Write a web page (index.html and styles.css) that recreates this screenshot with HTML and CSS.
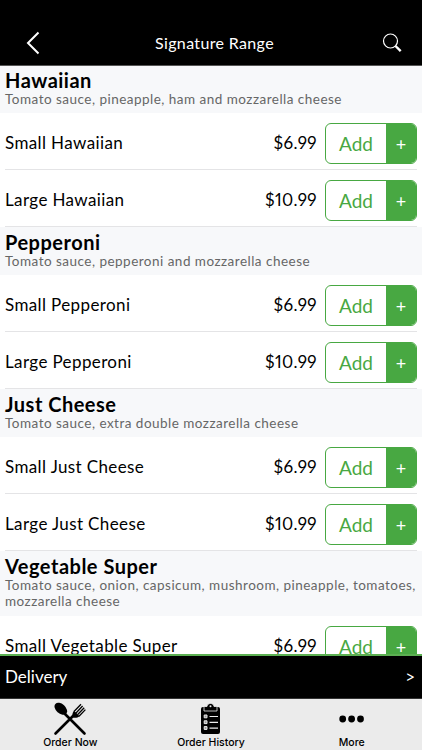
FILE: index.html
```
<!DOCTYPE html>
<html>
<head>
    <meta charset="utf-8">
    <title>Signature Range</title>
    <link rel="stylesheet" href="styles.css">
</head>
<body>
    <div class="navbar">
        <svg class="back" width="14" height="24" viewBox="0 0 14 24"><path d="M12.500 1.500L2 12l10.500 10.500"/></svg>
        <div class="navbar-title">Signature Range</div>
        <svg class="search" width="20" height="20" viewBox="0 0 20 20"><circle cx="8.500" cy="8" r="7"/><path d="M13.500 13l5.200 5.200"/></svg>
    </div>
    <div class="menu">
        <div class="group">
            <h2>Hawaiian</h2>
            <p>Tomato sauce, pineapple, ham and mozzarella cheese</p>
        </div>
        <div class="item">
            <span class="name">Small Hawaiian</span>
            <span class="price">$6.99</span>
            <div class="buy"><span class="add">Add</span><span class="plus">+</span></div>
        </div>
        <div class="item">
            <span class="name">Large Hawaiian</span>
            <span class="price">$10.99</span>
            <div class="buy"><span class="add">Add</span><span class="plus">+</span></div>
        </div>
        <div class="group">
            <h2>Pepperoni</h2>
            <p>Tomato sauce, pepperoni and mozzarella cheese</p>
        </div>
        <div class="item">
            <span class="name">Small Pepperoni</span>
            <span class="price">$6.99</span>
            <div class="buy"><span class="add">Add</span><span class="plus">+</span></div>
        </div>
        <div class="item">
            <span class="name">Large Pepperoni</span>
            <span class="price">$10.99</span>
            <div class="buy"><span class="add">Add</span><span class="plus">+</span></div>
        </div>
        <div class="group">
            <h2>Just Cheese</h2>
            <p>Tomato sauce, extra double mozzarella cheese</p>
        </div>
        <div class="item">
            <span class="name">Small Just Cheese</span>
            <span class="price">$6.99</span>
            <div class="buy"><span class="add">Add</span><span class="plus">+</span></div>
        </div>
        <div class="item">
            <span class="name">Large Just Cheese</span>
            <span class="price">$10.99</span>
            <div class="buy"><span class="add">Add</span><span class="plus">+</span></div>
        </div>
        <div class="group">
            <h2>Vegetable Super</h2>
            <p>Tomato sauce, onion, capsicum, mushroom, pineapple, tomatoes,<br>mozzarella cheese</p>
        </div>
        <div class="item">
            <span class="name">Small Vegetable Super</span>
            <span class="price">$6.99</span>
            <div class="buy"><span class="add">Add</span><span class="plus">+</span></div>
        </div>
    </div>
    <div class="delivery">
        <span>Delivery</span>
        <span class="arrow">&gt;</span>
    </div>
    <div class="tabs">
        <div class="tab">
            <svg width="34" height="34" viewBox="0 0 34 34">
                <path class="handle" d="M12 12L31.500 31.500M22 12L2.500 31.500"/>
                <ellipse cx="7.800" cy="6.800" rx="7.300" ry="4.800" transform="rotate(42 7.800 6.800)"/>
                <path d="M20 15.500c-1-3-.6-5 1-6.800l5.500 5.500c-2 1.600-4 2-6.500 1.300z"/>
                <path class="tines" d="M21 9.500L28 2.200M22.800 11.200L29.600 4M24.500 12.800L31.200 5.800M26 14.200L32.400 7.600"/>
            </svg>
            <span>Order Now</span>
        </div>
        <div class="tab">
            <svg width="34" height="34" viewBox="0 0 34 34">
                <rect x="7" y="5" width="19" height="27" rx="2"/>
                <path class="clip" d="M10 9V4.500h3C13.500 2.300 14.500 1.500 16.500 1.500s3 .8 3.500 3h3V9z"/>
                <circle class="hole" cx="16.500" cy="4.300" r="1"/>
                <path class="boxes" d="M10.200 13h2.800v2.800h-2.800zM10.200 18.800h2.800v2.800h-2.800zM10.200 24.600h2.800v2.800h-2.800z"/>
                <path class="lines" d="M15.500 14.500h8.500M15.500 20.300h8.500M15.500 26.100h8.500"/>
            </svg>
            <span>Order History</span>
        </div>
        <div class="tab">
            <svg width="34" height="34" viewBox="0 0 34 34"><circle cx="7.700" cy="17" r="3.400"/><circle cx="16.600" cy="17" r="3.400"/><circle cx="25.500" cy="17" r="3.400"/></svg>
            <span>More</span>
        </div>
    </div>
</body>
</html>
```
FILE: styles.css
```
* {
    box-sizing: border-box;
}
body {
    margin: 0;
    height: 750px;
    display: flex;
    flex-direction: column;
    overflow: hidden;
    background: #fff;
    color: #000;
    font-family: Lato, "Liberation Sans", sans-serif;
}
.navbar {
    flex: none;
    height: 66px;
    padding: 20px 20px 0 26px;
    display: flex;
    align-items: center;
    justify-content: space-between;
    background: #000;
    border-bottom: 1px solid #555;
    color: #fff;
}
.navbar svg {
    fill: none;
    stroke: #fff;
}
.back {
    stroke-width: 2;
}
.search {
    stroke-width: 1.2;
}
.search path {
    stroke-width: 2.4;
}
.navbar-title {
    padding-left: 7px;
    font-size: 16px;
    letter-spacing: 0.35px;
}
.menu {
    flex: none;
    height: 588px;
    overflow: hidden;
}
.group {
    padding: 5px 5px 6px;
    background: #f7f8fa;
}
.group:first-child {
    padding-top: 4px;
}
.group:nth-last-child(2) {
    padding-bottom: 7px;
}
.group h2 {
    margin: 0;
    font-size: 20px;
    line-height: 21px;
    font-weight: 700;
    letter-spacing: 0.5px;
}
.group p {
    margin: 0;
    font-size: 13.5px;
    line-height: 16px;
    letter-spacing: 0.48px;
    color: #666;
    white-space: nowrap;
}
.item {
    height: 57px;
    margin: 0 5px;
    padding-top: 3px;
    display: flex;
    align-items: center;
    border-bottom: 1px solid #e4e4e6;
    font-size: 17px;
}
.name {
    flex: 1;
    letter-spacing: 0.38px;
}
.price {
    font-variant-numeric: proportional-nums;
    letter-spacing: 0.4px;
}
.buy {
    width: 92px;
    height: 41px;
    margin: 1px 0 0 8px;
    display: flex;
    border: 1px solid #48a842;
    border-radius: 6px;
    overflow: hidden;
    line-height: 39px;
    text-align: center;
}
.add {
    flex: 1;
    font-size: 19px;
    color: #48a842;
}
.plus {
    width: 30px;
    padding-top: 1px;
    background: #48a842;
    color: #fff;
    font-size: 18px;
}
.delivery {
    flex: none;
    height: 45px;
    padding: 0 7px 1px 5px;
    display: flex;
    align-items: center;
    justify-content: space-between;
    background: #000;
    border-top: 2px solid #5cb052;
    border-bottom: 1px solid #333;
    color: #fff;
    font-size: 17px;
}
.tabs {
    flex: none;
    height: 51px;
    display: flex;
    background: #ebebeb;
}
.tab {
    flex: 1;
    padding-top: 3px;
    display: flex;
    flex-direction: column;
    align-items: center;
    font-family: Inter, sans-serif;
    font-size: 10.5px;
    line-height: 14px;
    font-weight: 500;
}
.tab svg {
    flex: none;
}
.handle {
    stroke: #000;
    stroke-width: 2.6;
    stroke-linecap: round;
}
.tines {
    stroke: #000;
    stroke-width: 1.3;
}
.clip {
    stroke: #ebebeb;
    stroke-width: 0.8;
}
.hole {
    fill: #ebebeb;
}
.boxes {
    fill: #999;
    stroke: #ebebeb;
}
.lines {
    stroke: #ebebeb;
    stroke-width: 1.2;
}
```
